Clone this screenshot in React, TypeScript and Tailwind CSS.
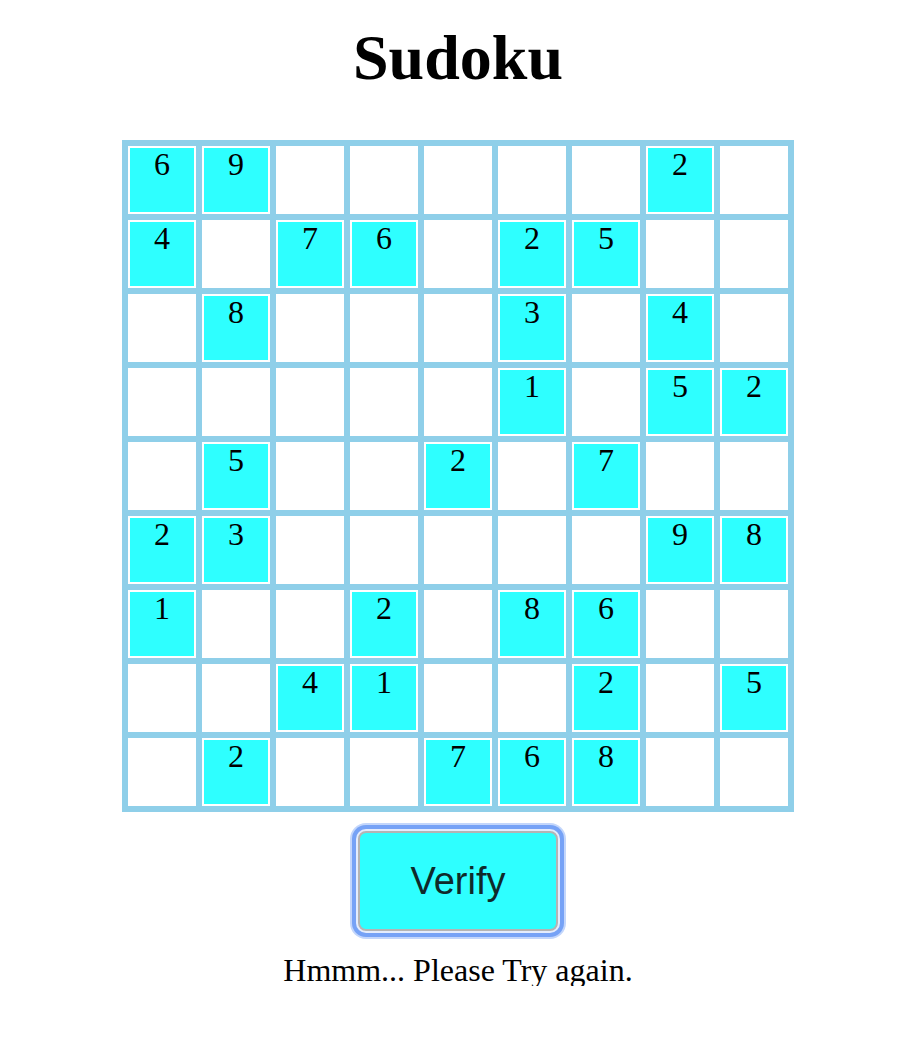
const board: (number | null)[][] = [
  [6, 9, null, null, null, null, null, 2, null],
  [4, null, 7, 6, null, 2, 5, null, null],
  [null, 8, null, null, null, 3, null, 4, null],
  [null, null, null, null, null, 1, null, 5, 2],
  [null, 5, null, null, 2, null, 7, null, null],
  [2, 3, null, null, null, null, null, 9, 8],
  [1, null, null, 2, null, 8, 6, null, null],
  [null, null, 4, 1, null, null, 2, null, 5],
  [null, 2, null, null, 7, 6, 8, null, null],
]

function Cell({ value }: { value: number | null }) {
  return (
    <div
      className={
        value === null
          ? "w-[68px] h-[68px] border-2 border-white bg-white"
          : "w-[68px] h-[68px] border-2 border-white bg-[#2effff] flex justify-center text-[32px] leading-none text-black"
      }
    >
      {value}
    </div>
  )
}

export default function App() {
  return (
    <div
      className="w-[916px] flex flex-col items-center bg-white"
      style={{ fontFamily: '"Liberation Serif", "Times New Roman", serif' }}
    >
      <h1 className="pt-[26px] text-[64px] font-bold leading-none text-black">
        Sudoku
      </h1>

      {/* BOARD */}
      <div className="mt-[50px] grid grid-cols-9 gap-[6px] p-[6px] bg-[#8fcfe9]">
        {board.map((row, r) =>
          row.map((v, c) => <Cell key={`${r}-${c}`} value={v} />)
        )}
      </div>

      <button
        className="mt-[19px] w-[200px] h-[100px] rounded-[8px] border-2 border-[#b4b4b4] bg-[#2effff] text-[38px] text-[#0f2a2a] shadow-[0_0_0_2px_#e4ecfd,0_0_0_6px_#76a2f6,0_0_0_8px_#c3d6fb]"
        style={{ fontFamily: '"Liberation Sans", Arial, sans-serif' }}
      >
        Verify
      </button>

      <p className="mt-[23px] text-[32px] leading-none text-black">
        Hmmm... Please Try again.
      </p>
    </div>
  )
}
